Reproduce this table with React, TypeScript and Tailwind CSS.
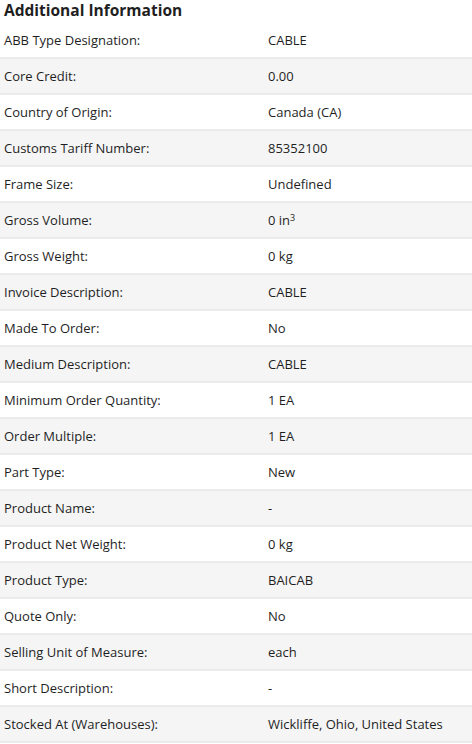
const rows: [string, React.ReactNode][] = [
  ["ABB Type Designation:", "CABLE"],
  ["Core Credit:", "0.00"],
  ["Country of Origin:", "Canada (CA)"],
  ["Customs Tariff Number:", "85352100"],
  ["Frame Size:", "Undefined"],
  ["Gross Volume:", <>0 in<sup className="text-[9px]">3</sup></>],
  ["Gross Weight:", "0 kg"],
  ["Invoice Description:", "CABLE"],
  ["Made To Order:", "No"],
  ["Medium Description:", "CABLE"],
  ["Minimum Order Quantity:", "1 EA"],
  ["Order Multiple:", "1 EA"],
  ["Part Type:", "New"],
  ["Product Name:", "-"],
  ["Product Net Weight:", "0 kg"],
  ["Product Type:", "BAICAB"],
  ["Quote Only:", "No"],
  ["Selling Unit of Measure:", "each"],
  ["Short Description:", "-"],
  ["Stocked At (Warehouses):", "Wickliffe, Ohio, United States"],
]

export default function App() {
  return (
    <div className="w-[472px] h-[744px] bg-white text-[#1f1f1f] font-['Open_Sans',sans-serif]">
      {/* Header */}
      <h2 className="h-[23px] px-1 text-[15.5px] font-bold leading-[20px]">Additional Information</h2>

      {/* Table */}
      <div className="flex flex-col">
        {rows.map(([label, value], i) => (
          <div
            key={label}
            className={`flex h-[36px] items-center border-b-2 border-[#ebebeb] pt-[2px] text-[13px] ${
              i % 2 === 1 ? "bg-[#f5f5f5]" : "bg-white"
            }`}
          >
            <div className="w-[268px] pl-1">{label}</div>
            <div className="flex-1">{value}</div>
          </div>
        ))}
      </div>
    </div>
  )
}
